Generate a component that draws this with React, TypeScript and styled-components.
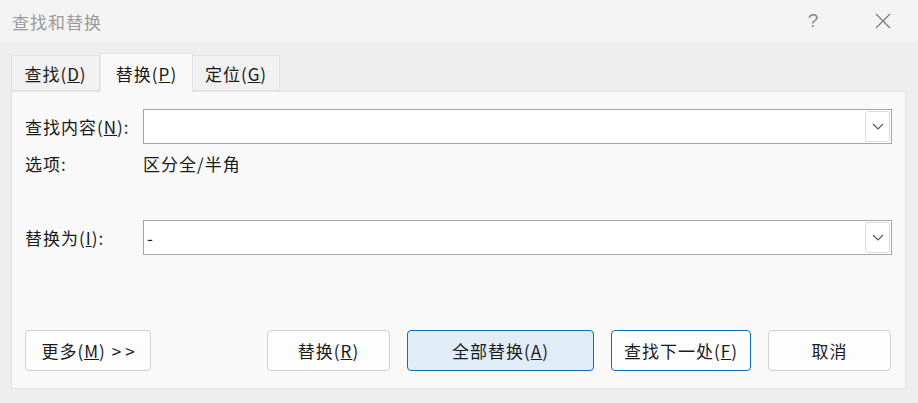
import React from 'react';
import styled, { createGlobalStyle } from 'styled-components';

const font = `"Noto Sans CJK SC", "Noto Sans", sans-serif`;

const GlobalStyle = createGlobalStyle`
  html, body {
    margin: 0;
    padding: 0;
    background: #ffffff;
  }
  body {
    font-family: ${font};
    color: #1a1a1a;
  }
`;

const Window = styled.div`
  width: 918px;
  height: 403px;
  background: #eeeeee;
  display: flex;
  flex-direction: column;
  overflow: hidden;
`;

const TitleBar = styled.div`
  height: 42px;
  background: #f3f3f3;
  display: flex;
  align-items: center;
  padding-left: 12px;
  box-sizing: border-box;
`;

const Title = styled.span`
  font-size: 17px;
  color: #9a9a9a;
  flex: 1;
  letter-spacing: 1px;
`;

const TitleButton = styled.div<{ $w: number }>`
  width: ${p => p.$w}px;
  height: 42px;
  display: flex;
  align-items: center;
  justify-content: center;
  color: #8a8a8a;
  font-size: 19px;
  font-family: "Liberation Sans", sans-serif;
`;

const Body = styled.div`
  flex: 1;
  display: flex;
  flex-direction: column;
  padding: 11px 12px 14px 11px;
`;

const TabRow = styled.div`
  display: flex;
  align-items: flex-end;
  height: 38px;
`;

const Tab = styled.div<{ $w: number; $active?: boolean }>`
  width: ${p => p.$w}px;
  height: ${p => (p.$active ? 39 : 36)}px;
  box-sizing: border-box;
  background: ${p => (p.$active ? '#f9f9f9' : '#f1f1f1')};
  border: 1px solid #e3e3e3;
  border-bottom: ${p => (p.$active ? 'none' : '1px solid #e3e3e3')};
  border-left: ${p => (p.$active ? '1px solid #e3e3e3' : 'none')};
  margin-bottom: ${p => (p.$active ? -1 : 0)}px;
  position: relative;
  z-index: ${p => (p.$active ? 2 : 1)};
  display: flex;
  align-items: center;
  justify-content: center;
  font-size: 17px;
  letter-spacing: 1px;
  padding-top: ${p => (p.$active ? 0 : 1)}px;
  &:first-child {
    border-left: 1px solid #e3e3e3;
  }
`;

const Panel = styled.div`
  flex: 1;
  background: #f9f9f9;
  border: 1px solid #e3e3e3;
  display: flex;
  flex-direction: column;
  padding: 17px 13px 17px 13px;
`;

const FieldRow = styled.div<{ $gap?: number }>`
  display: flex;
  align-items: center;
  height: 35px;
  margin-top: ${p => p.$gap ?? 0}px;
`;

const Label = styled.div`
  width: 118px;
  font-size: 17px;
  letter-spacing: 1px;
`;

const ComboBox = styled.div`
  flex: 1;
  height: 35px;
  box-sizing: border-box;
  border: 1px solid #a6a6a6;
  background: #ffffff;
  display: flex;
  align-items: center;
  padding: 0 1px 0 3px;
`;

const ComboText = styled.div`
  flex: 1;
  font-size: 17px;
`;

const DropButton = styled.div`
  width: 25px;
  height: 31px;
  box-sizing: border-box;
  border: 1px solid #dcdcdc;
  border-radius: 3px;
  display: flex;
  align-items: center;
  justify-content: center;
`;

const OptionRow = styled.div`
  display: flex;
  align-items: center;
  height: 24px;
  margin-top: 7px;
`;

const OptionValue = styled.div`
  font-size: 17px;
  letter-spacing: 1px;
`;

const ButtonRow = styled.div`
  margin-top: auto;
  display: flex;
  align-items: center;
  gap: 17px;
  padding-right: 1px;
`;

const Button = styled.div<{ $w: number; $variant?: 'primary' | 'focus' }>`
  width: ${p => p.$w}px;
  height: 41px;
  box-sizing: border-box;
  border-radius: 4px;
  border: 1px solid ${p => (p.$variant ? '#0f6cbd' : '#d1d1d1')};
  background: ${p => (p.$variant === 'primary' ? '#e0ecf8' : '#fdfdfd')};
  display: flex;
  align-items: center;
  justify-content: center;
  font-size: 17px;
  letter-spacing: 1px;
  white-space: pre;
`;

const Arrows = styled.span`
  letter-spacing: 4px;
  margin-left: 6px;
  margin-right: -4px;
`;

const Spacer = styled.div`
  flex: 1;
`;

const Chevron = () => (
  <svg width="12" height="7" viewBox="0 0 12 7">
    <polyline points="1,1 6,6 11,1" fill="none" stroke="#555" strokeWidth="1.1" />
  </svg>
);

const CloseIcon = () => (
  <svg width="16" height="16" viewBox="0 0 16 16">
    <path d="M1 1 L15 15 M15 1 L1 15" stroke="#7a7a7a" strokeWidth="1.2" />
  </svg>
);

function App() {
  return (
    <>
      <GlobalStyle />
      <Window>
        <TitleBar>
          <Title>查找和替换</Title>
          <TitleButton $w={70}>?</TitleButton>
          <TitleButton $w={70}>
            <CloseIcon />
          </TitleButton>
        </TitleBar>
        <Body>
          <TabRow>
            <Tab $w={89}>查找(<u>D</u>)</Tab>
            <Tab $w={93} $active>替换(<u>P</u>)</Tab>
            <Tab $w={87}>定位(<u>G</u>)</Tab>
          </TabRow>
          <Panel>
            <FieldRow>
              <Label>查找内容(<u>N</u>):</Label>
              <ComboBox>
                <ComboText />
                <DropButton>
                  <Chevron />
                </DropButton>
              </ComboBox>
            </FieldRow>
            <OptionRow>
              <Label>选项:</Label>
              <OptionValue>区分全/半角</OptionValue>
            </OptionRow>
            <FieldRow $gap={45}>
              <Label>替换为(<u>I</u>):</Label>
              <ComboBox>
                <ComboText>-</ComboText>
                <DropButton>
                  <Chevron />
                </DropButton>
              </ComboBox>
            </FieldRow>
            <ButtonRow>
              <Button $w={126}>
                更多(<u>M</u>)<Arrows>&gt;&gt;</Arrows>
              </Button>
              <Spacer />
              <Button $w={123}>替换(<u>R</u>)</Button>
              <Button $w={187} $variant="primary">全部替换(<u>A</u>)</Button>
              <Button $w={140} $variant="focus">查找下一处(<u>F</u>)</Button>
              <Button $w={123}>取消</Button>
            </ButtonRow>
          </Panel>
        </Body>
      </Window>
    </>
  );
}

export default App;
